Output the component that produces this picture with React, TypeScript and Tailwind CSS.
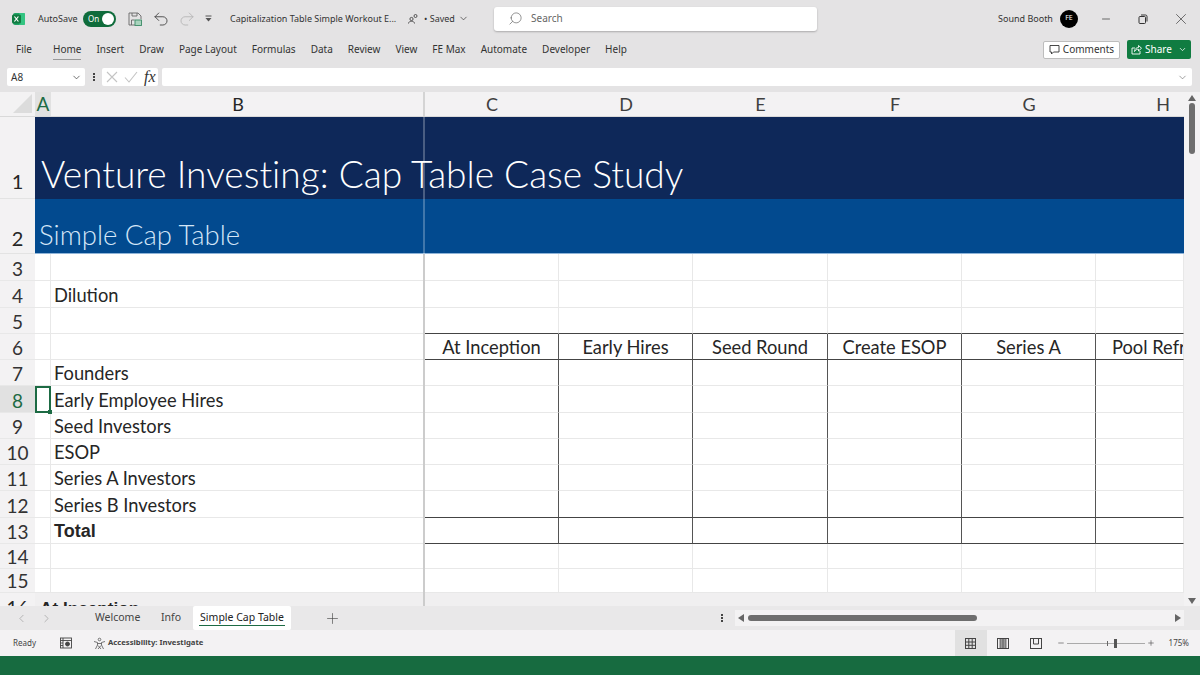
import { ChevronDown, ChevronLeft, ChevronRight, Minus, Plus, Redo2, Search, Undo2, X } from 'lucide-react';

const ribbonTabs = ['Home', 'Insert', 'Draw', 'Page Layout', 'Formulas', 'Data', 'Review', 'View', 'FE Max', 'Automate', 'Developer', 'Help'];

const columns = [
  { name: 'C', heading: 'At Inception' },
  { name: 'D', heading: 'Early Hires' },
  { name: 'E', heading: 'Seed Round' },
  { name: 'F', heading: 'Create ESOP' },
  { name: 'G', heading: 'Series A' },
  { name: 'H', heading: 'Pool Refresh' },
];

const labels: Record<number, string> = {
  4: 'Dilution',
  7: 'Founders',
  8: 'Early Employee Hires',
  9: 'Seed Investors',
  10: 'ESOP',
  11: 'Series A Investors',
  12: 'Series B Investors',
  13: 'Total',
};

const bodyRows = [3, 4, 5, 6, 7, 8, 9, 10, 11, 12, 13, 14, 15];

const ExcelLogo = () => (
  <svg width="14" height="14" viewBox="0 0 14 14">
    <rect x="1" y="1" width="12" height="12" rx="2" fill="#21a366" />
    <rect x="7" y="1" width="6" height="12" rx="1" fill="#33c481" />
    <rect x="0" y="2.500" width="9" height="9" rx="1.500" fill="#107c41" />
    <path d="M2.400 4.500 L6.400 9.500 M6.400 4.500 L2.400 9.500" stroke="#fff" strokeWidth="1.200" />
  </svg>
);

const SaveIcon = () => (
  <svg width="14" height="14" viewBox="0 0 14 14" fill="none" stroke="#666" strokeWidth="0.900">
    <path d="M1 1h9l3 3v3M7 13H1V1" />
    <path d="M4 1v3h5V1M3.500 13V8h3" />
    <rect x="7" y="8" width="6.500" height="5.500" fill="#a9d3bd" stroke="#3b8a66" />
  </svg>
);

const PeopleIcon = () => (
  <svg width="10" height="10" viewBox="0 0 10 10" fill="none" stroke="#444" strokeWidth="0.900">
    <circle cx="3.500" cy="5" r="1.600" />
    <path d="M0.500 9.500c0-3 6-3 6 0" />
    <circle cx="7.500" cy="2" r="1.500" />
  </svg>
);

const RestoreIcon = () => (
  <svg width="10" height="10" viewBox="0 0 10 10" fill="none" stroke="#333" strokeWidth="1">
    <rect x="1" y="2.500" width="6.500" height="7" rx="1" />
    <path d="M3 1h4.500a1.500 1.500 0 0 1 1.500 1.500V7.500" />
  </svg>
);

const CommentIcon = () => (
  <svg width="11" height="11" viewBox="0 0 11 11" fill="none" stroke="#333" strokeWidth="0.900">
    <path d="M1 1.500h9v6.500H4.500L2.500 10V8H1z" />
  </svg>
);

const ShareIcon = () => (
  <svg width="11" height="11" viewBox="0 0 11 11" fill="none" stroke="#fff" strokeWidth="0.900">
    <path d="M4 4H1v6h8V7" />
    <path d="M3.500 7.500C3.500 4.500 6 3.500 7.500 3.500V1.500L10.500 4.200 7.500 7V5.200C6 5.200 4.500 5.800 3.500 7.500z" />
  </svg>
);

const CancelIcon = () => (
  <svg width="12" height="12" viewBox="0 0 12 12" fill="none" stroke="#c4c4c4" strokeWidth="1.100">
    <path d="M1 1l10 10M11 1L1 11" />
  </svg>
);

const EnterIcon = () => (
  <svg width="14" height="12" viewBox="0 0 14 12" fill="none" stroke="#c4c4c4" strokeWidth="1.100">
    <path d="M1 6.500l4 4.500 8-10" />
  </svg>
);

const MacroIcon = () => (
  <svg width="12" height="12" viewBox="0 0 12 12" fill="none" stroke="#444" strokeWidth="0.900">
    <rect x="0.500" y="1" width="11" height="10" />
    <path d="M0.500 3.500h11M3 1v10M0.500 6h2.500M0.500 8.500h2.500" />
    <circle cx="7.500" cy="7" r="2" fill="#444" />
  </svg>
);

const AccessibilityIcon = () => (
  <svg width="13" height="13" viewBox="0 0 13 13" fill="none" stroke="#555" strokeWidth="0.800">
    <circle cx="6.500" cy="2.500" r="1.300" />
    <path d="M1 4.500l3.500 1v2.500L2.500 12M12 4.500l-3.500 1v2.500l2 4M4.500 6.500h4" />
    <path d="M5 8.500l3 3.500M8 8.500l-3 3.500" />
  </svg>
);

const NormalViewIcon = () => (
  <svg width="11" height="11" viewBox="0 0 11 11" fill="none" stroke="#444" strokeWidth="1">
    <rect x="0.500" y="0.500" width="10" height="10" />
    <path d="M0.500 4h10M0.500 7.300h10M3.800 0.500v10M7.200 0.500v10" />
  </svg>
);

const PageLayoutIcon = () => (
  <svg width="12" height="11" viewBox="0 0 12 11" fill="none" stroke="#444" strokeWidth="1">
    <rect x="3" y="0.500" width="6" height="10" fill="#9a9a9a" stroke="none" />
    <rect x="0.500" y="0.500" width="11" height="10" />
    <path d="M3 0.500v10M6 0.500v10M9 0.500v10" strokeWidth="0.700" />
  </svg>
);

const PageBreakIcon = () => (
  <svg width="12" height="11" viewBox="0 0 12 11" fill="none" stroke="#444" strokeWidth="1">
    <rect x="0.500" y="0.500" width="11" height="10" />
    <path d="M3.500 0.500v5.500h5V0.500" />
  </svg>
);

const Arrow = ({ dir }: { dir: 'up' | 'down' | 'left' | 'right' }) => {
  const points = {
    up: '0,7 4,1 8,7',
    down: '0,1 4,7 8,1',
    left: '7,0 1,4 7,8',
    right: '1,0 7,4 1,8',
  }[dir];
  return (
    <svg width="8" height="8" viewBox="0 0 8 8">
      <polygon points={points} fill="#666" />
    </svg>
  );
};

const TitleBar = () => (
  <div className="h-[37px] flex items-center text-[9px] text-[#333] pl-[12px]">
    <ExcelLogo />
    <span className="ml-[12px] w-[45px]">AutoSave</span>
    <div className="w-[33px] h-[16px] rounded-full bg-[#0f6c3b] flex items-center justify-between pl-[5px] pr-[2px]">
      <span className="text-[8px] text-white leading-none">On</span>
      <div className="w-[12px] h-[12px] rounded-full bg-white" />
    </div>
    <div className="ml-[12px]"><SaveIcon /></div>
    <Undo2 size={18} strokeWidth={1.2} className="ml-[10px] text-[#444]" />
    <Redo2 size={18} strokeWidth={1.2} className="ml-[8px] text-[#b5b5b5]" />
    <svg width="7" height="7" viewBox="0 0 7 7" className="ml-[9px]">
      <path d="M0.500 1h6" stroke="#555" />
      <polygon points="0.500,3 6.500,3 3.500,6.500" fill="#555" />
    </svg>
    <span className="ml-[18px] w-[170px] whitespace-nowrap">Capitalization Table Simple Workout E...</span>
    <div className="ml-[8px]"><PeopleIcon /></div>
    <span className="ml-[6px] w-[46px] flex items-center gap-[3px] whitespace-nowrap">• Saved <ChevronDown size={11} strokeWidth={1.5} /></span>
    <div className="ml-[24px] w-[323px] h-[24px] bg-white rounded-[3px] shadow-[0_1px_2px_rgba(0,0,0,0.25)] flex items-center pl-[14px] text-[#666]">
      <Search size={15} strokeWidth={1.1} className="-scale-x-100" />
      <span className="ml-[8px] text-[10px]">Search</span>
    </div>
    <span className="ml-[181px] w-[62px] whitespace-nowrap">Sound Booth</span>
    <div className="w-[18px] h-[18px] rounded-full bg-black flex items-center justify-center text-[7px] text-white">FE</div>
    <Minus size={12} strokeWidth={1.4} className="ml-[22px] text-[#333]" />
    <div className="ml-[26px]"><RestoreIcon /></div>
    <X size={18} strokeWidth={0.9} className="ml-[24px] text-[#333]" />
  </div>
);

const RibbonTabs = () => (
  <div className="h-[25px] flex items-center text-[10px] text-[#333] pl-[16px] pr-[9px]">
    <span className="w-[16px]">File</span>
    <div className="ml-[21px] flex items-center gap-[15px]">
      {ribbonTabs.map((tab) => (
        <span key={tab} className={tab === 'Home' ? 'relative whitespace-nowrap' : 'whitespace-nowrap'}>
          {tab}
          {tab === 'Home' && <span className="absolute left-0 right-0 -bottom-[3px] h-px bg-[#999]" />}
        </span>
      ))}
    </div>
    <div className="ml-auto flex items-center gap-[7px]">
      <div className="w-[77px] h-[18px] bg-white border border-[#bdbdbd] rounded-[2px] flex items-center justify-center gap-[3px]">
        <CommentIcon />
        <span>Comments</span>
      </div>
      <div className="w-[64px] h-[19px] bg-[#107c41] rounded-[2px] text-white flex items-center justify-center gap-[3px]">
        <ShareIcon />
        <span>Share</span>
        <ChevronDown size={9} className="ml-[3px]" />
      </div>
    </div>
  </div>
);

const FormulaBar = () => (
  <div className="h-[30px] flex items-start pt-[6px] pl-[7px] pr-[8px] text-[10px] text-[#333]">
    <div className="w-[78px] h-[18px] bg-white rounded-[2px] flex items-center justify-between pl-[4px] pr-[3px]">
      <span>A8</span>
      <ChevronDown size={11} strokeWidth={1.5} />
    </div>
    <div className="w-[17px] h-[18px] flex flex-col items-center justify-center gap-[1px]">
      <span className="w-[2px] h-[2px] bg-[#444]" />
      <span className="w-[2px] h-[2px] bg-[#444]" />
      <span className="w-[2px] h-[2px] bg-[#444]" />
    </div>
    <div className="w-[56px] h-[18px] bg-white rounded-[2px] flex items-center pl-[4px] gap-[6px]">
      <CancelIcon />
      <EnterIcon />
      <span className="font-['Liberation_Serif',serif] italic text-[16px] leading-none text-[#333]">fx</span>
    </div>
    <div className="ml-[4px] flex-1 h-[18px] bg-white rounded-[2px] flex items-center justify-end pr-[4px]">
      <ChevronDown size={11} strokeWidth={1.2} className="text-[#555]" />
    </div>
  </div>
);

const SheetGrid = () => (
  <div className="relative flex-1 overflow-hidden font-['Lato',sans-serif]">
    <div className="grid grid-cols-[35px_16px_374px_134px_134px_135px_134px_134px_88px] grid-rows-[25px_82px_55px_27px_27px_26px_26px_26px_27px_26px_26px_26px_27px_26px_25px_24px_40px] text-[#262626]">
      {/* column headers */}
      <div className="bg-[#f3f2f3] border-b border-[#d9d9d9] flex items-center justify-end pr-[2px]">
        <svg width="20" height="20" viewBox="0 0 20 20">
          <polygon points="19,0 19,19 0,19" fill="#dcdcdc" />
        </svg>
      </div>
      <div className="bg-[#e1e1e1] border-b border-[#d9d9d9] flex items-center justify-center text-[19px] text-[#1d6b44]">A</div>
      <div className="bg-[#f3f2f3] border-b border-[#d9d9d9] flex items-center justify-center text-[18px]">B</div>
      {columns.map((col) => (
        <div key={col.name} className={col.name === 'H' ? 'bg-[#f3f2f3] border-b border-[#d9d9d9] flex items-center justify-center pl-[46px] text-[18px] text-[#404040]' : 'bg-[#f3f2f3] border-b border-[#d9d9d9] flex items-center justify-center text-[18px] text-[#404040]'}>{col.name}</div>
      ))}

      {/* banner rows */}
      <div className="bg-[#f3f2f3] border-b border-[#e3e3e3] flex items-end justify-center pb-[7px] text-[20px] leading-none">1</div>
      <div className="col-span-8 bg-[#0e2859] flex items-end pl-[6px] pb-[1px] text-[37.100px] font-light [font-variant-ligatures:none] text-white whitespace-nowrap leading-[48px]">Venture Investing: Cap Table Case Study</div>
      <div className="bg-[#f3f2f3] border-b border-[#e3e3e3] flex items-end justify-center pb-[5px] text-[20px] leading-none">2</div>
      <div className="col-span-8 bg-[#024a8f] border-b border-[#8fb4d8] flex items-end pl-[4px] text-[27.500px] font-light text-[#d4e6f7] whitespace-nowrap leading-[36px]">Simple Cap Table</div>

      {bodyRows.map((row) => {
        const selected = row === 8;
        const inTable = row >= 6 && row <= 13;
        const darkBottom = row === 5 || row === 6 || row === 12 || row === 13;
        return [
          <div key={`${row}-h`} className={selected ? 'bg-[#e1e1e1] border-b border-[#e8e8e8] flex items-end justify-center text-[19px] leading-[22px] text-[#1d6b44]' : 'bg-[#f3f2f3] border-b border-[#e8e8e8] flex items-end justify-center text-[19px] leading-[22px] text-[#333]'}>
            {row}
          </div>,
          <div key={`${row}-a`} className={selected ? 'relative border-2 border-[#1d6b44]' : 'border-b border-r border-[#e8e8e8]'}>
            {selected && <span className="absolute -right-[3px] -bottom-[3px] w-[4px] h-[4px] bg-[#1d6b44]" />}
          </div>,
          <div key={`${row}-b`} className={row === 13 ? "border-b border-[#e8e8e8] flex items-end pl-[3px] font-['Liberation_Sans',sans-serif] font-bold text-[18px] leading-[24px]" : 'border-b border-[#e8e8e8] flex items-end pl-[3px] text-[18.300px] leading-[24px]'}>
            {labels[row]}
          </div>,
          ...columns.map((col) => (
            <div
              key={`${row}-${col.name}`}
              className={`flex items-end justify-center overflow-hidden whitespace-nowrap text-[18.300px] leading-[24px] border-b border-r ${darkBottom ? 'border-b-[#444]' : 'border-b-[#e8e8e8]'} ${inTable && col.name !== 'H' ? 'border-r-[#555]' : 'border-r-[#e8e8e8]'} ${col.name === 'H' ? 'justify-start pl-[16px]' : ''}`}
            >
              {row === 6 ? col.heading : ''}
            </div>
          )),
        ];
      })}

      {/* row 16 is cut off by the tab strip */}
      <div className="bg-[#f3f2f3] flex items-start justify-center pt-[3px] text-[19px] leading-[24px]">16</div>
      <div className="col-span-8 bg-[#f0eff0] pl-[5px] pt-[3px] font-['Liberation_Sans',sans-serif] font-bold text-[17.200px] leading-[24px]">At Inception</div>
    </div>
    {/* frozen pane divider */}
    <div className="absolute left-[423px] top-0 bottom-0 w-[2px] flex flex-col">
      <div className="h-[25px] bg-[#d4d4d4]" />
      <div className="h-[137px] bg-white/25" />
      <div className="flex-1 bg-[#cccccc]" />
    </div>
  </div>
);

const VerticalScroll = () => (
  <div className="w-[16px] bg-[#f3f2f3] flex flex-col items-center pt-[2px] pb-[1px]">
    <Arrow dir="up" />
    <div className="mt-[1px] w-[6px] h-[51px] rounded-full bg-[#6e6e6e]" />
    <div className="mt-auto"><Arrow dir="down" /></div>
  </div>
);

const SheetTabs = () => (
  <div className="h-[24px] bg-[#e9e8e9] flex items-center text-[10.500px] text-[#444]">
    <ChevronLeft size={13} strokeWidth={1.2} className="ml-[15px] text-[#999]" />
    <ChevronRight size={13} strokeWidth={1.2} className="ml-[12px] text-[#999]" />
    <span className="ml-[42px] w-[45px] whitespace-nowrap">Welcome</span>
    <span className="ml-[21px] w-[19px]">Info</span>
    <div className="ml-[13px] w-[98px] h-[24px] bg-white flex flex-col items-center justify-center rounded-[2px]">
      <span className="text-[#222] leading-[14px] whitespace-nowrap">Simple Cap Table</span>
      <span className="w-[86px] h-px bg-[#1d6b44] mt-[1px]" />
    </div>
    <Plus size={17} strokeWidth={0.9} className="ml-[33px] text-[#444]" />
    <div className="ml-[380px] flex flex-col gap-[1px]">
      <span className="w-[2px] h-[2px] bg-[#444]" />
      <span className="w-[2px] h-[2px] bg-[#444]" />
      <span className="w-[2px] h-[2px] bg-[#444]" />
    </div>
    <div className="ml-[12px] w-[449px] h-[16px] bg-[#f3f2f3] flex items-center px-[2px]">
      <Arrow dir="left" />
      <div className="ml-[3px] w-[229px] h-[6px] rounded-full bg-[#6e6e6e]" />
      <div className="ml-auto"><Arrow dir="right" /></div>
    </div>
  </div>
);

const StatusBar = () => (
  <div className="h-[26px] bg-[#f3f2f3] flex items-center text-[8px] text-[#444] pl-[13px] pr-[11px]">
    <span className="w-[47px]">Ready</span>
    <MacroIcon />
    <div className="ml-[21px]"><AccessibilityIcon /></div>
    <span className="ml-[2px] font-bold text-[7.700px]">Accessibility: Investigate</span>
    <div className="ml-auto h-[26px] w-[32px] bg-[#e1e1e1] flex items-center justify-center"><NormalViewIcon /></div>
    <div className="ml-[10px]"><PageLayoutIcon /></div>
    <div className="ml-[21px]"><PageBreakIcon /></div>
    <Minus size={8} className="ml-[15px] text-[#555]" />
    <div className="relative ml-[2px] w-[78px] h-px bg-[#aaa]">
      <span className="absolute left-[40px] -top-[2px] w-px h-[5px] bg-[#666]" />
      <span className="absolute left-[47px] -top-[4px] w-[3px] h-[9px] bg-[#555]" />
    </div>
    <Plus size={8} className="ml-[2px] text-[#555]" />
    <span className="ml-[14px]">175%</span>
  </div>
);

export default function App() {
  return (
    <div className="w-[1200px] h-[675px] overflow-hidden flex flex-col bg-[#e4e3e4] font-['Noto_Sans',sans-serif]">
      <TitleBar />
      <RibbonTabs />
      <FormulaBar />
      <div className="h-[514px] flex bg-white">
        <SheetGrid />
        <VerticalScroll />
      </div>
      <SheetTabs />
      <StatusBar />
      <div className="h-[19px] bg-[#176b40]" />
    </div>
  );
}
